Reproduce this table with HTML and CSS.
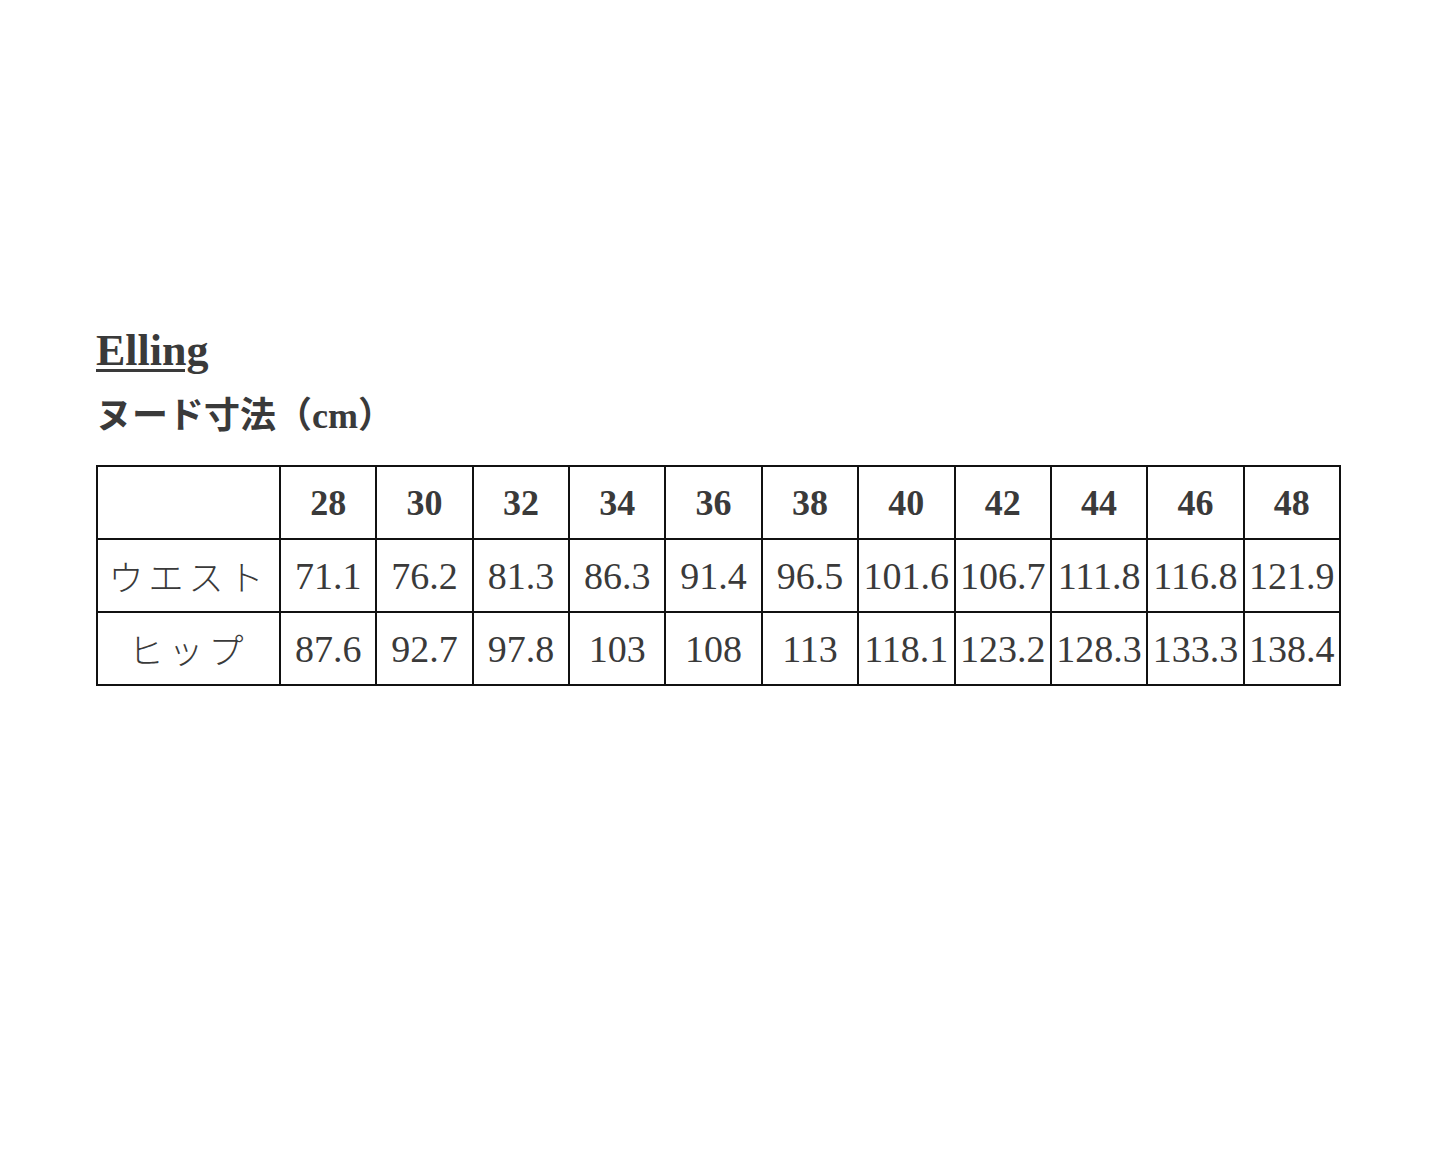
FILE: index.html
```html
<!DOCTYPE html>
<html lang="ja">
<head>
<meta charset="utf-8">
<title>Elling</title>
<link rel="stylesheet" href="styles.css">
</head>
<body>
<main class="page">
  <h2 class="brand">Elling</h2>
  <h3 class="subtitle">ヌード寸法（cm）</h3>
  <table class="size-table">
    <thead>
      <tr>
        <th class="label"></th>
        <th>28</th><th>30</th><th>32</th><th>34</th><th>36</th><th>38</th><th>40</th><th>42</th><th>44</th><th>46</th><th>48</th>
      </tr>
    </thead>
    <tbody>
      <tr>
        <td class="label">ウエスト</td>
        <td>71.1</td><td>76.2</td><td>81.3</td><td>86.3</td><td>91.4</td><td>96.5</td><td>101.6</td><td>106.7</td><td>111.8</td><td>116.8</td><td>121.9</td>
      </tr>
      <tr>
        <td class="label">ヒップ</td>
        <td>87.6</td><td>92.7</td><td>97.8</td><td>103</td><td>108</td><td>113</td><td>118.1</td><td>123.2</td><td>128.3</td><td>133.3</td><td>138.4</td>
      </tr>
    </tbody>
  </table>
</main>
</body>
</html>
```

FILE: styles.css
```css
html, body {
  margin: 0;
  padding: 0;
  background: #fff;
}

body {
  font-family: "Liberation Serif", "Noto Sans CJK JP", serif;
  color: #3a3a3a;
}

.page {
  padding: 326px 99px 0 96px;
}

.brand {
  margin: 0;
  font-size: 44px;
  line-height: 50px;
  font-weight: 700;
  text-decoration: underline;
  text-decoration-thickness: 3px;
  text-underline-offset: 4px;
}

.subtitle {
  margin: 18px 0 0 0;
  font-size: 36px;
  line-height: 44px;
  font-weight: 700;
}

.size-table {
  margin-top: 27px;
  width: 1245px;
  border-collapse: collapse;
  table-layout: fixed;
}

.size-table th,
.size-table td {
  border: 2px solid #111;
  height: 71px;
  padding: 0;
  text-align: center;
  vertical-align: middle;
  font-size: 38px;
  line-height: 44px;
  white-space: nowrap;
}

.size-table th {
  font-weight: 700;
  font-size: 36px;
}

.size-table .label {
  width: 181px;
  font-family: "Noto Sans CJK JP", sans-serif;
  font-weight: 300;
  font-size: 35px;
  letter-spacing: 5px;
}
```
